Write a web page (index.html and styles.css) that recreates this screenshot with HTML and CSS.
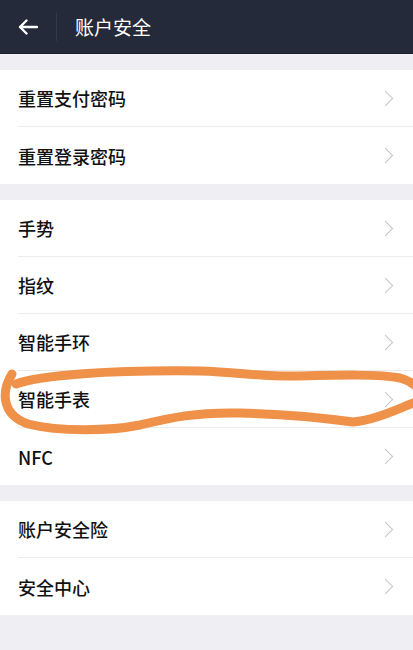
FILE: index.html
```html
<!DOCTYPE html>
<html lang="zh-CN">
<head>
<meta charset="utf-8">
<link rel="stylesheet" href="styles.css">
</head>
<body>
<div class="page">
  <header class="bar">
    <span class="back">
      <svg width="20" height="16" viewBox="0 0 20 16"><path d="M19 8H2M8.5 1.5L2 8l6.5 6.5" fill="none" stroke="#fff" stroke-width="2.4" stroke-linecap="round" stroke-linejoin="round"/></svg>
    </span>
    <span class="sep"></span>
    <h1 class="title">账户安全</h1>
  </header>
  <section class="group">
    <div class="row"><span>重置支付密码</span><i class="chev"></i></div>
    <div class="row"><span>重置登录密码</span><i class="chev"></i></div>
  </section>
  <section class="group">
    <div class="row"><span>手势</span><i class="chev"></i></div>
    <div class="row"><span>指纹</span><i class="chev"></i></div>
    <div class="row"><span>智能手环</span><i class="chev"></i></div>
    <div class="row"><span>智能手表</span><i class="chev"></i></div>
    <div class="row"><span>NFC</span><i class="chev"></i></div>
  </section>
  <section class="group">
    <div class="row"><span>账户安全险</span><i class="chev"></i></div>
    <div class="row"><span>安全中心</span><i class="chev"></i></div>
  </section>
  <svg class="ink" width="413" height="650" viewBox="0 0 413 650">
    <path d="M16,384 C40,375 110,370 200,371 C240,372 260,377 300,376 C340,375 380,374 400,378 C408,380 412,383 416,386" />
    <path d="M12,374 C2,390 0,414 28,424 C60,432 110,431 140,425 C170,418 195,412 240,413 C290,414 325,418 353,422 C375,420 395,410 416,402" />
  </svg>
</div>
</body>
</html>
```
FILE: styles.css
```css
* { box-sizing: border-box; }
html, body { margin: 0; padding: 0; }
body {
  background: #eeeef3;
  font-family: "Noto Sans CJK SC", "Noto Sans", sans-serif;
  width: 413px;
  height: 650px;
  overflow: hidden;
}
.page { position: relative; width: 413px; height: 650px; }
.bar {
  height: 54px;
  background: #252a3a;
  display: flex;
  align-items: center;
  border-bottom: 1px solid #1c2030;
}
.back { width: 56px; display: flex; justify-content: flex-start; padding-left: 18px; align-items: center; }
.back svg { display: block; }
.sep { width: 1px; height: 28px; background: #353a4a; }
.title {
  margin: 0 0 0 18px;
  font-size: 19px;
  font-weight: 400;
  color: #fff;
  line-height: 1;
}
.group {
  background: #fff;
  margin-top: 16px;
}
.row {
  height: 57px;
  display: flex;
  align-items: center;
  justify-content: space-between;
  margin-left: 18px;
  padding-right: 19px;
  border-bottom: 1px solid #ececef;
  font-size: 18px;
  font-weight: 500;
  color: #111;
}
.row:last-child { border-bottom: none; }
.chev {
  width: 11px;
  height: 11px;
  border-top: 1.4px solid #c4c4c8;
  border-right: 1.4px solid #c4c4c8;
  transform: rotate(45deg);
  margin-right: 3px;
}
.ink {
  position: absolute;
  left: 0;
  top: 0;
  pointer-events: none;
}
.ink path {
  fill: none;
  stroke: #f0914a;
  stroke-width: 9;
  stroke-linecap: round;
  stroke-linejoin: round;
}
```
